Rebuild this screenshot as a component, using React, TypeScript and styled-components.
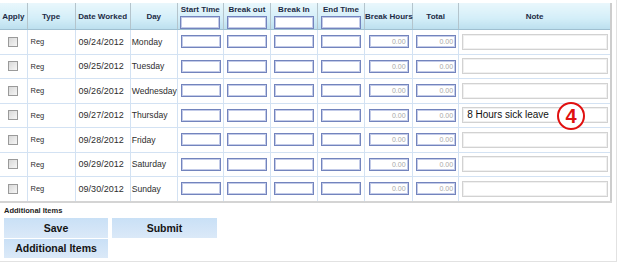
import styled, { createGlobalStyle } from "styled-components";

const GlobalStyle = createGlobalStyle`
  html, body {
    margin: 0;
    padding: 0;
    background: #ffffff;
  }
  body {
    font-family: "Liberation Sans", Arial, sans-serif;
  }
`;

const Frame = styled.div`
  width: 617px;
  height: 262px;
  padding-top: 3px;
  box-sizing: border-box;
  border-right: 1px solid #e2e2e2;
  border-bottom: 1px solid #e2e2e2;
`;

const Grid = styled.table`
  width: 612px;
  border-collapse: collapse;
  table-layout: fixed;
  border-right: 2px solid #cdcdcd;
  border-bottom: 2px solid #d4d4d4;
`;

const Head = styled.th<{ $top?: boolean }>`
  height: ${(p) => (p.$top ? "24px" : "26px")};
  padding: ${(p) => (p.$top ? "2px 0 0" : "0")};
  box-sizing: border-box;
  vertical-align: ${(p) => (p.$top ? "top" : "middle")};
  background: linear-gradient(#e9f7fc, #d3eef8 60%, #bcdfee);
  border-left: 1px solid #b4c4cc;
  border-bottom: 1px solid #9fbfd0;
  font-size: 8px;
  font-weight: bold;
  color: #1d2b45;
  text-align: center;
  white-space: nowrap;
  &:first-child {
    border-left: none;
  }
`;

const Row = styled.tr`
  height: 24.5px;
`;

const Cell = styled.td<{ $small?: boolean; $center?: boolean; $tight?: boolean }>`
  padding: ${(p) => (p.$tight ? "0 0 0 1px" : "0 3px")};
  height: 23.5px;
  border-left: 1px solid #d3e2f3;
  border-bottom: 1px solid #d3e2f3;
  font-size: ${(p) => (p.$small ? "7.5px" : p.$tight ? "8.6px" : "9px")};
  color: #2e2e2e;
  text-align: ${(p) => (p.$center ? "center" : "left")};
  white-space: nowrap;
  overflow: hidden;
  &:first-child {
    border-left: none;
  }
`;

const NoteCell = styled.td`
  position: relative;
  padding: 0 3px;
  border-left: 1px solid #d3e2f3;
  border-bottom: 1px solid #d3e2f3;
`;

const Check = styled.span`
  display: inline-block;
  width: 8px;
  height: 8px;
  margin-top: 2px;
  border: 1px solid #9a9a9a;
  background: linear-gradient(135deg, #d8d8d8, #f6f6f6);
`;

const TimeBox = styled.div<{ $header?: boolean }>`
  box-sizing: border-box;
  width: 40px;
  height: 13px;
  margin: ${(p) => (p.$header ? "2px auto 0" : "0 auto")};
  border: 1px solid #7384bd;
  box-shadow: inset 0 0 0 1px #c3cbe8;
  background: #ffffff;
  font-size: 7px;
  line-height: 11px;
  color: #a8a8a8;
  text-align: right;
  padding-right: 2px;
`;

const NoteBox = styled.div`
  box-sizing: border-box;
  width: 146px;
  height: 16px;
  border: 1px solid #d2d2d2;
  box-shadow: inset 0 0 0 1px #f0f0f0;
  background: #ffffff;
  font-size: 10px;
  line-height: 14px;
  color: #111111;
  padding-left: 4px;
`;

const Marker = styled.div`
  position: absolute;
  left: 98px;
  top: -2px;
  width: 24px;
  height: 24px;
  border: 2px solid #e01010;
  border-radius: 50%;
  background: #ffffff;
  color: #e01010;
  font-size: 20px;
  font-weight: bold;
  line-height: 24px;
  text-align: center;
`;

const Footer = styled.div`
  padding: 3px 0 0 4px;
`;

const Caption = styled.div`
  font-size: 7.5px;
  font-weight: bold;
  color: #222222;
  margin-bottom: 3px;
`;

const ButtonGrid = styled.div`
  display: grid;
  grid-template-columns: 104px 105px;
  grid-template-rows: 20px 19px;
  column-gap: 4px;
  row-gap: 1px;
`;

const Button = styled.div`
  background: linear-gradient(#c9e0f6, #dbe9f8);
  font-size: 10.5px;
  font-weight: bold;
  color: #141414;
  display: flex;
  align-items: center;
  justify-content: center;
`;

const columns = [
  { label: "Apply", width: 27 },
  { label: "Type", width: 48 },
  { label: "Date Worked", width: 55 },
  { label: "Day", width: 47 },
  { label: "Start Time", width: 46, input: true },
  { label: "Break out", width: 47, input: true },
  { label: "Break In", width: 47, input: true },
  { label: "End Time", width: 47, input: true },
  { label: "Break Hours", width: 48 },
  { label: "Total", width: 46 },
  { label: "Note", width: 152 },
];

const days = [
  { date: "09/24/2012", day: "Monday" },
  { date: "09/25/2012", day: "Tuesday" },
  { date: "09/26/2012", day: "Wednesday" },
  { date: "09/27/2012", day: "Thursday", note: "8 Hours sick leave" },
  { date: "09/28/2012", day: "Friday" },
  { date: "09/29/2012", day: "Saturday" },
  { date: "09/30/2012", day: "Sunday" },
];

export default function App() {
  return (
    <>
      <GlobalStyle />
      <Frame>
        <Grid>
          <colgroup>
            {columns.map((c) => (
              <col key={c.label} style={{ width: c.width }} />
            ))}
          </colgroup>
          <thead>
            <tr>
              {columns.map((c) => (
                <Head key={c.label} $top={c.input}>
                  {c.label}
                  {c.input && <TimeBox $header />}
                </Head>
              ))}
            </tr>
          </thead>
          <tbody>
            {days.map((d) => (
              <Row key={d.date}>
                <Cell $center>
                  <Check />
                </Cell>
                <Cell $small>Reg</Cell>
                <Cell>{d.date}</Cell>
                <Cell $tight>{d.day}</Cell>
                <Cell>
                  <TimeBox />
                </Cell>
                <Cell>
                  <TimeBox />
                </Cell>
                <Cell>
                  <TimeBox />
                </Cell>
                <Cell>
                  <TimeBox />
                </Cell>
                <Cell>
                  <TimeBox>0.00</TimeBox>
                </Cell>
                <Cell>
                  <TimeBox>0.00</TimeBox>
                </Cell>
                <NoteCell>
                  <NoteBox>{d.note}</NoteBox>
                  {d.note && <Marker>4</Marker>}
                </NoteCell>
              </Row>
            ))}
          </tbody>
        </Grid>
        <Footer>
          <Caption>Additional Items</Caption>
          <ButtonGrid>
            <Button>Save</Button>
            <Button>Submit</Button>
            <Button>Additional Items</Button>
          </ButtonGrid>
        </Footer>
      </Frame>
    </>
  );
}
